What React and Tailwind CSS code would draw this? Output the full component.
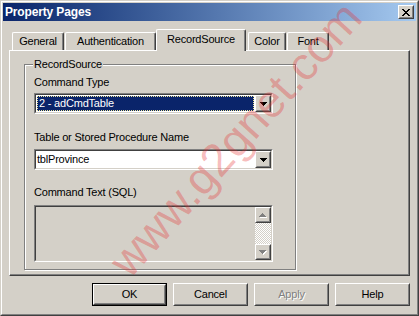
import React from "react";

const font = "font-['Liberation_Sans',Arial,sans-serif]";

// raised 3D frame used by push buttons and the small arrow buttons
function Raised({ className = "", children }) {
  return (
    <div
      className={`border border-t-white border-l-white border-r-[#404040] border-b-[#404040] ${className}`}
    >
      <div className="w-full h-full flex items-center justify-center border border-t-[#d4d0c8] border-l-[#d4d0c8] border-r-[#808080] border-b-[#808080]">
        {children}
      </div>
    </div>
  );
}

function Sunken({ className = "", children }) {
  return (
    <div
      className={`border border-t-[#808080] border-l-[#808080] border-r-white border-b-white ${className}`}
    >
      <div className="w-full h-full flex border border-t-[#404040] border-l-[#404040] border-r-[#d4d0c8] border-b-[#d4d0c8]">
        {children}
      </div>
    </div>
  );
}

function DownArrow() {
  return (
    <svg width="7" height="4" shapeRendering="crispEdges">
      <rect x="0" y="0" width="7" height="1" fill="#000" />
      <rect x="1" y="1" width="5" height="1" fill="#000" />
      <rect x="2" y="2" width="3" height="1" fill="#000" />
      <rect x="3" y="3" width="1" height="1" fill="#000" />
    </svg>
  );
}

function GrayArrow({ up }) {
  const rows = up ? [1, 3, 5, 7] : [7, 5, 3, 1];
  return (
    <svg width="8" height="5" shapeRendering="crispEdges">
      {rows.map((w, i) => (
        <rect key={"s" + i} x={(7 - w) / 2 + 1} y={i + 1} width={w} height="1" fill="#fff" />
      ))}
      {rows.map((w, i) => (
        <rect key={"g" + i} x={(7 - w) / 2} y={i} width={w} height="1" fill="#808080" />
      ))}
    </svg>
  );
}

function CloseGlyph() {
  const r = [
    [0, 0, 2], [6, 0, 2], [1, 1, 2], [5, 1, 2], [2, 2, 4], [3, 3, 2],
    [2, 4, 4], [1, 5, 2], [5, 5, 2], [0, 6, 2], [6, 6, 2],
  ];
  return (
    <svg width="8" height="7" shapeRendering="crispEdges">
      {r.map(([x, y, w], i) => (
        <rect key={i} x={x} y={y} width={w} height="1" fill="#000" />
      ))}
    </svg>
  );
}

function Tab({ label, width, selected, className = "" }) {
  return (
    <div
      className={`flex justify-center border-l border-t border-l-white border-t-white border-r border-r-[#404040] shadow-[inset_-1px_0_0_#808080] rounded-t-[2px] bg-[#d4d0c8] ${
        selected ? "h-[22px] -mb-px relative z-10 pt-[3px]" : "h-[18px] pt-[2px]"
      } ${className}`}
      style={{ width }}
    >
      {label}
    </div>
  );
}

function PushButton({ label, isDefault, disabled }) {
  return (
    <div className={`w-[75px] h-[23px] ${isDefault ? "border border-black" : ""}`}>
      <Raised className="w-full h-full">
        <span className={disabled ? "text-[#808080] [text-shadow:1px_1px_0_#fff]" : ""}>
          {label}
        </span>
      </Raised>
    </div>
  );
}

export default function App() {
  return (
    <div
      className={`relative w-[419px] h-[316px] overflow-hidden bg-[#d4d0c8] border border-t-[#d4d0c8] border-l-[#d4d0c8] border-r-[#404040] border-b-[#404040] ${font} text-[11px] leading-[13px] tracking-[-0.2px] text-black`}
    >
      <div className="flex flex-col h-full border border-t-white border-l-white border-r-[#808080] border-b-[#808080] p-px">
        {/* title bar */}
        <div className="h-[18px] flex items-center justify-between pl-[2px] pr-[2px] bg-linear-to-r from-[#0a246a] to-[#a6caf0]">
          <span className="text-white font-bold text-[12px] tracking-[-0.15px]">Property Pages</span>
          <Raised className="w-[16px] h-[14px] bg-[#d4d0c8]">
            <CloseGlyph />
          </Raised>
        </div>

        {/* tab strip */}
        <div className="mt-[8px] h-[21px] flex items-end pl-[9px]">
          <Tab label="General" width={52} className="mr-px" />
          <Tab label="Authentication" width={91} />
          <Tab label="RecordSource" width={90} selected className="mr-[2px]" />
          <Tab label="Color" width={38} className="mr-px" />
          <Tab label="Font" width={42} />
        </div>

        {/* tab panel */}
        <div className="mx-[6px] h-[226px] border border-t-white border-l-white border-r-[#404040] border-b-[#404040] shadow-[inset_-1px_-1px_0_#808080] pl-[14px] pt-[13px]">
          <div className="relative w-[272px] h-[206px] border border-[#808080] shadow-[inset_1px_1px_0_#fff,1px_1px_0_#fff] pl-[9px] pt-[11px]">
            <span className="absolute left-[8px] -top-[7px] px-px bg-[#d4d0c8]">RecordSource</span>

            <div>Command Type</div>
            <Sunken className="mt-[4px] w-[239px] h-[21px] bg-white">
              <div className="flex-1 p-px">
                <div className="h-full bg-[#0a246a] border border-dotted border-[#efe69a] text-white pl-[1px] flex items-center">
                  2 - adCmdTable
                </div>
              </div>
              <Raised className="w-[16px] h-full bg-[#d4d0c8]">
                <DownArrow />
              </Raised>
            </Sunken>

            <div className="mt-[17px]">Table or Stored Procedure Name</div>
            <Sunken className="mt-[5px] w-[239px] h-[21px] bg-white">
              <div className="flex-1 flex items-center pl-[1px]">tblProvince</div>
              <Raised className="w-[16px] h-full bg-[#d4d0c8]">
                <DownArrow />
              </Raised>
            </Sunken>

            <div className="mt-[16px]">Command Text (SQL)</div>
            <Sunken className="mt-[6px] w-[239px] h-[57px] bg-[#d4d0c8]">
              <div className="flex-1" />
              <div className="w-[16px] flex flex-col">
                <Raised className="w-[16px] h-[16px]">
                  <GrayArrow up />
                </Raised>
                <div className="flex-1 bg-[repeating-conic-gradient(#fff_0_25%,#d4d0c8_0_50%)] bg-[length:2px_2px]" />
                <Raised className="w-[16px] h-[16px]">
                  <GrayArrow />
                </Raised>
              </div>
            </Sunken>
          </div>
        </div>

        {/* buttons */}
        <div className="mt-[7px] mr-[6px] flex justify-end gap-[6px]">
          <PushButton label="OK" isDefault />
          <PushButton label="Cancel" />
          <PushButton label="Apply" disabled />
          <PushButton label="Help" />
        </div>
      </div>

      {/* watermark */}
      <div className="absolute left-[234px] top-[138px] -translate-x-1/2 -translate-y-1/2 rotate-[-48deg] whitespace-nowrap pointer-events-none text-[46px] leading-none tracking-normal text-[rgba(230,50,50,0.32)]">
        www.g2gnet.com
      </div>
    </div>
  );
}
